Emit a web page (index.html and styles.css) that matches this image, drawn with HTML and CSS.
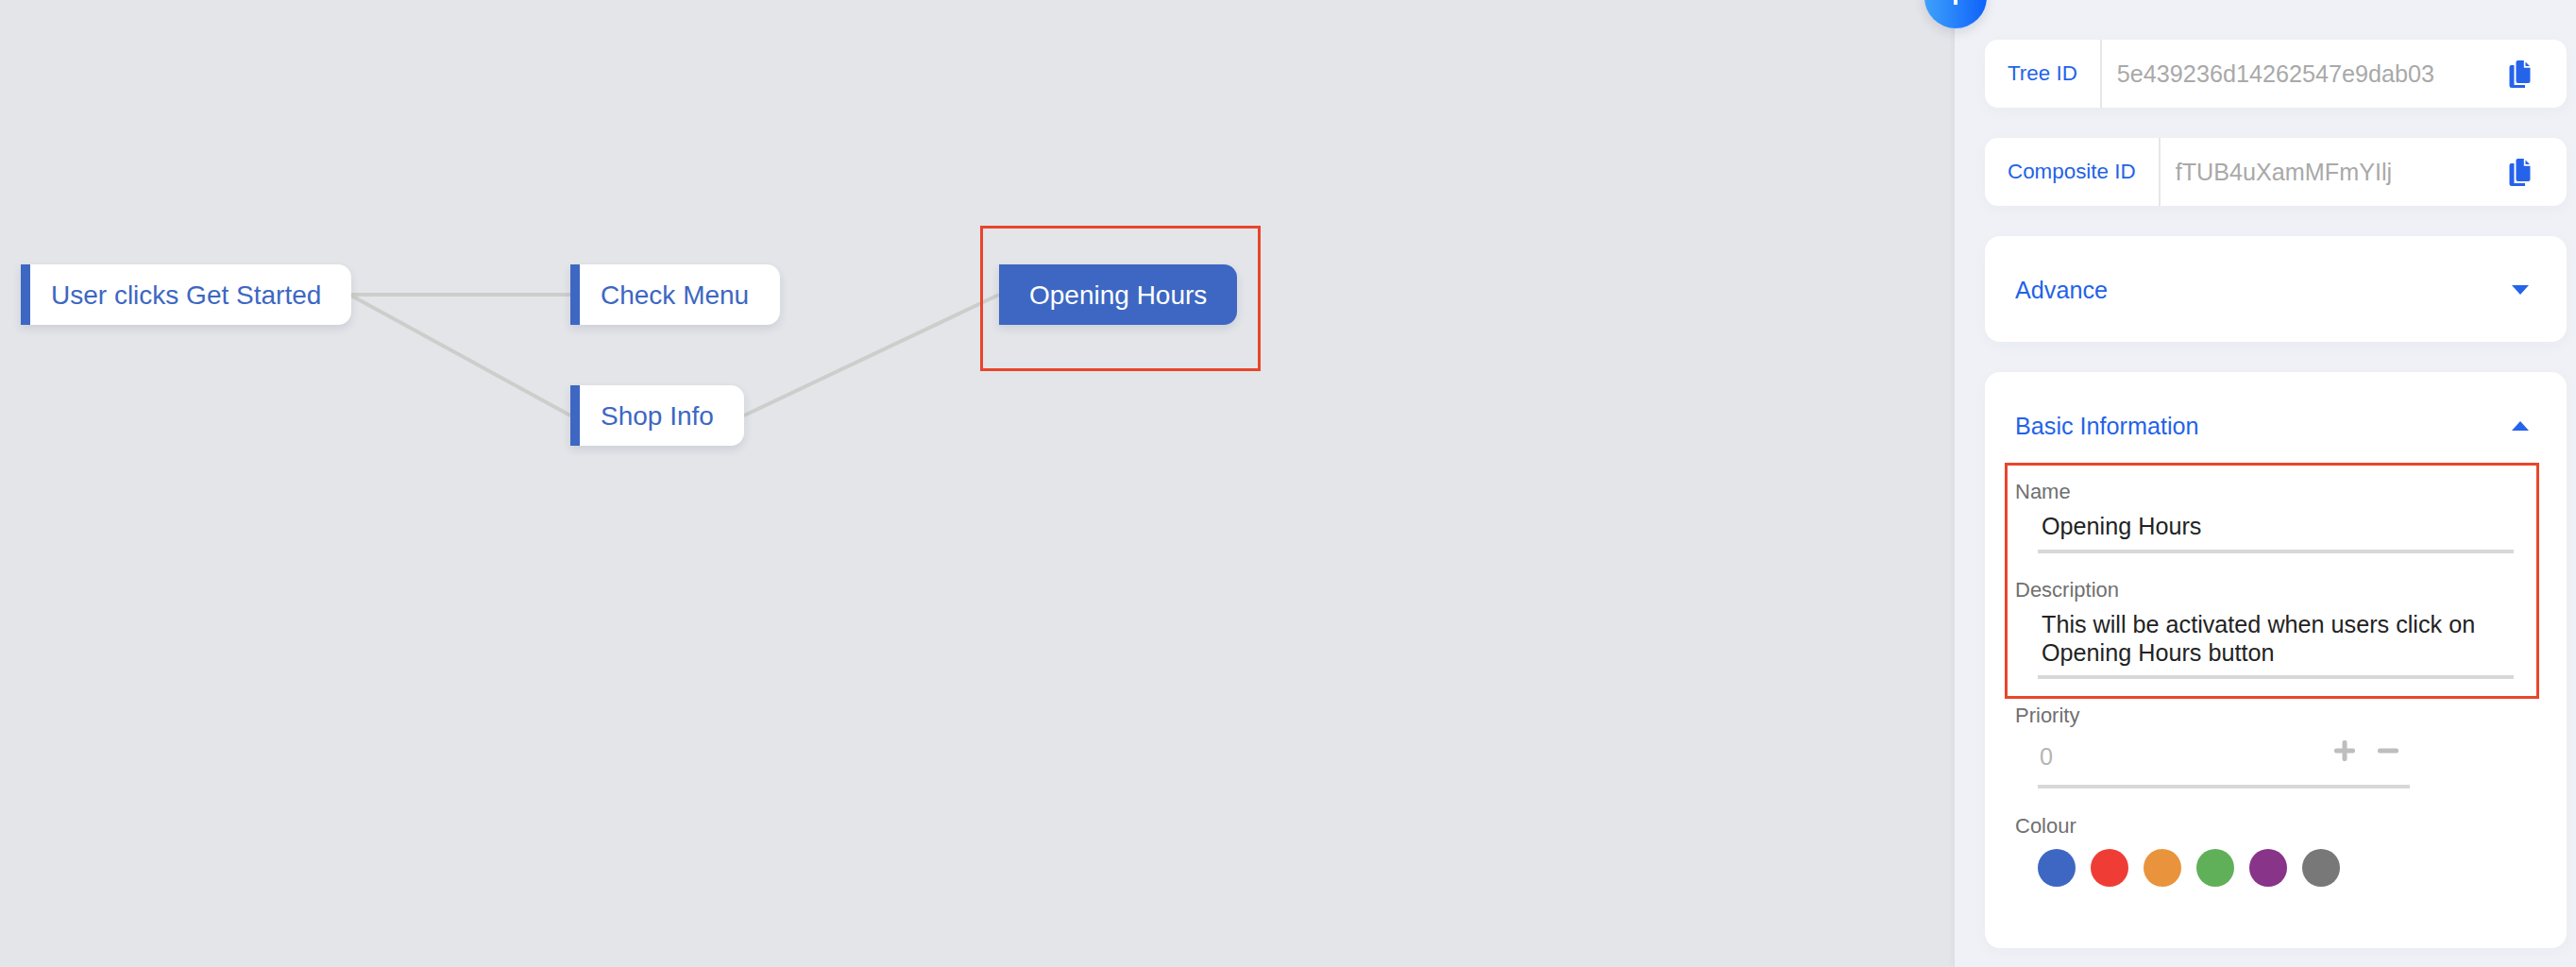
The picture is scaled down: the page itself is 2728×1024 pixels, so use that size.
FILE: index.html
```html
<!DOCTYPE html>
<html lang="en">
<head>
<meta charset="utf-8">
<title>Tree editor</title>
<link rel="stylesheet" href="styles.css">
</head>
<body>
<div class="app">
  <main class="canvas">
    <svg class="edges" width="2070" height="1024" viewBox="0 0 2070 1024" aria-hidden="true">
      <line x1="372" y1="312" x2="604" y2="312"/>
      <line x1="372" y1="313" x2="604" y2="440"/>
      <line x1="788" y1="440" x2="1058" y2="312"/>
    </svg>
    <div class="node node-start">User clicks Get Started</div>
    <div class="node node-menu">Check Menu</div>
    <div class="node node-shop">Shop Info</div>
    <div class="node node-hours is-active">Opening Hours</div>
    <div class="annotation annotation-node"></div>
  </main>
  <aside class="panel">
    <button class="fab" aria-label="Add">
      <svg width="16" height="16" viewBox="0 0 16 16"><rect x="6" y="0" width="4" height="16" fill="#fff"/><rect x="0" y="6" width="16" height="4" fill="#fff"/></svg>
    </button>
    <div class="id-card">
      <div class="id-label">Tree ID</div>
      <div class="id-value">5e439236d14262547e9dab03</div>
      <svg class="copy" width="23" height="29" viewBox="0 0 22 29" aria-hidden="true"><path d="M2 5h3v21h11.500v3H2.500A2.500 2.500 0 0 1 0 26.500V7a2 2 0 0 1 2-2z"/><path d="M9 0h6.300v7.700H22V22a2 2 0 0 1-2 2H9a2 2 0 0 1-2-2V2a2 2 0 0 1 2-2z"/><path d="M17 1.500 21.500 6H17z"/></svg>
    </div>
    <div class="id-card">
      <div class="id-label">Composite ID</div>
      <div class="id-value">fTUB4uXamMFmYIlj</div>
      <svg class="copy" width="23" height="29" viewBox="0 0 22 29" aria-hidden="true"><path d="M2 5h3v21h11.500v3H2.500A2.500 2.500 0 0 1 0 26.500V7a2 2 0 0 1 2-2z"/><path d="M9 0h6.300v7.700H22V22a2 2 0 0 1-2 2H9a2 2 0 0 1-2-2V2a2 2 0 0 1 2-2z"/><path d="M17 1.500 21.500 6H17z"/></svg>
    </div>
    <section class="card card-closed">
      <h2 class="card-title">Advance</h2>
      <span class="arrow arrow-down"></span>
    </section>
    <section class="card card-open">
      <div class="card-head">
        <h2 class="card-title">Basic Information</h2>
        <span class="arrow arrow-up"></span>
      </div>
      <div class="annotation annotation-form"></div>
      <div class="field-label">Name</div>
      <div class="field-value field-name">Opening Hours</div>
      <div class="field-label label-next">Description</div>
      <div class="field-value field-desc">This will be activated when users click on Opening Hours button</div>
      <div class="field-label label-next">Priority</div>
      <div class="stepper">
        <span class="stepper-value">0</span>
        <div class="stepper-buttons">
          <svg width="22" height="22" viewBox="0 0 22 22" aria-hidden="true"><rect x="8.500" y="0" width="5" height="22" rx="2"/><rect x="0" y="8.500" width="22" height="5" rx="2"/></svg>
          <svg width="22" height="22" viewBox="0 0 22 22" aria-hidden="true"><rect x="0" y="8.500" width="22" height="5" rx="2"/></svg>
        </div>
      </div>
      <div class="field-label label-colour">Colour</div>
      <div class="swatches">
        <span class="swatch swatch-blue"></span>
        <span class="swatch swatch-red"></span>
        <span class="swatch swatch-orange"></span>
        <span class="swatch swatch-green"></span>
        <span class="swatch swatch-purple"></span>
        <span class="swatch swatch-grey"></span>
      </div>
    </section>
  </aside>
</div>
</body>
</html>
```
FILE: styles.css
```css
* { box-sizing: border-box; }
html, body { margin: 0; padding: 0; height: 100%; overflow: hidden; }
body { font-family: "Liberation Sans", Arial, sans-serif; background: #e3e5e9; }
.app { display: flex; width: 2728px; height: 1024px; overflow: hidden; }

.canvas { position: relative; flex: 0 0 2070px; height: 1024px; background: #e3e5e9; }
.edges { position: absolute; left: 0; top: 0; }
.edges line { stroke: #cdcdcb; stroke-width: 4; }

.node {
  position: absolute; top: 280px; height: 64px; display: flex; align-items: center;
  padding: 2px 32px 0 22px; background: #fff; color: #3d67c3; font-size: 28px; white-space: nowrap;
  border-left: 10px solid #3d67c3; border-radius: 0 14px 14px 0;
  box-shadow: 0 4px 10px rgba(40, 50, 80, .12);
}
.node-start { left: 22px; width: 350px; }
.node-menu { left: 604px; width: 222px; }
.node-shop { left: 604px; top: 408px; width: 184px; }
.node-hours { left: 1058px; width: 252px; padding-left: 22px; }
.node.is-active { background: #3d67c3; color: #fff; }

.annotation { position: absolute; border: 3px solid #e9452a; pointer-events: none; }
.annotation-node { left: 1038px; top: 239px; width: 297px; height: 154px; }
.annotation-form { left: 21px; top: 96px; width: 566px; height: 250px; }

.panel {
  position: relative; flex: 1; height: 1024px; padding: 42px 10px 0 32px;
  background: #eff1f6; display: flex; flex-direction: column; gap: 32px;
  box-shadow: -2px 0 6px rgba(40, 50, 80, .05);
}
.fab {
  position: absolute; left: -32px; top: -36px; width: 66px; height: 66px; border: 0; padding: 0;
  border-radius: 50%; background: linear-gradient(90deg, #3ea1fb, #0f62fb);
  box-shadow: 0 4px 12px rgba(40, 50, 80, .14);
  display: flex; align-items: center; justify-content: center;
}

.id-card {
  display: flex; align-items: center; height: 72px; background: #fff; border-radius: 14px;
  box-shadow: 0 4px 16px rgba(40, 50, 80, .03); flex: none;
}
.id-label {
  height: 100%; display: flex; align-items: center; padding: 0 24px; font-size: 22.4px; color: #1f63e8;
  border-right: 2px solid #e6e6e6;
}
.id-value { flex: 1; padding-left: 16px; font-size: 25.2px; color: #a9a9a9; }
.copy { margin-right: 38px; fill: #2563eb; flex: none; }

.card { background: #fff; border-radius: 16px; box-shadow: 0 4px 16px rgba(40, 50, 80, .03); flex: none; }
.card-closed { height: 112px; display: flex; align-items: center; justify-content: space-between; padding: 2px 40px 0 32px; }
.card-open { position: relative; height: 610px; padding: 0 32px; }
.card-head { height: 114px; display: flex; align-items: center; justify-content: space-between; padding-right: 8px; }
.card-title { margin: 0; font-size: 25.2px; font-weight: 400; color: #1f63e8; }
.arrow { width: 0; height: 0; border-left: 9px solid transparent; border-right: 9px solid transparent; }
.arrow-down { border-top: 10px solid #2563eb; }
.arrow-up { border-bottom: 10px solid #2563eb; }

.field-label { font-size: 22px; height: 24px; line-height: 26px; color: #707070; }
.label-next { margin-top: 26px; }
.label-colour { margin-top: 26px; line-height: 28px; }
.field-value {
  width: 504px; margin: 10px 0 0 24px; padding: 0 40px 0 4px; font-size: 25.2px; line-height: 30px;
  color: #222; border-bottom: 4px solid #d8d8d8;
}
.field-name { padding-bottom: 10px; }
.field-desc { padding-bottom: 9px; }
.stepper {
  position: relative; width: 394px; height: 50px; margin: 16px 0 0 24px; padding: 0 12px 0 2px;
  display: flex; justify-content: space-between; align-items: flex-start;
  border-bottom: 4px solid #d8d8d8;
}
.stepper-value { font-size: 25.2px; line-height: 32px; color: #b5b5b5; }
.stepper-buttons { display: flex; gap: 24px; margin-top: -1px; }
.stepper-buttons svg { fill: #bebebe; display: block; }

.swatches { display: flex; gap: 16px; margin: 14px 0 0 24px; }
.swatch { width: 40px; height: 40px; border-radius: 50%; }
.swatch-blue { background: #3d67c3; }
.swatch-red { background: #ef3d36; }
.swatch-orange { background: #e9943c; }
.swatch-green { background: #60b059; }
.swatch-purple { background: #873489; }
.swatch-grey { background: #787878; }
```
